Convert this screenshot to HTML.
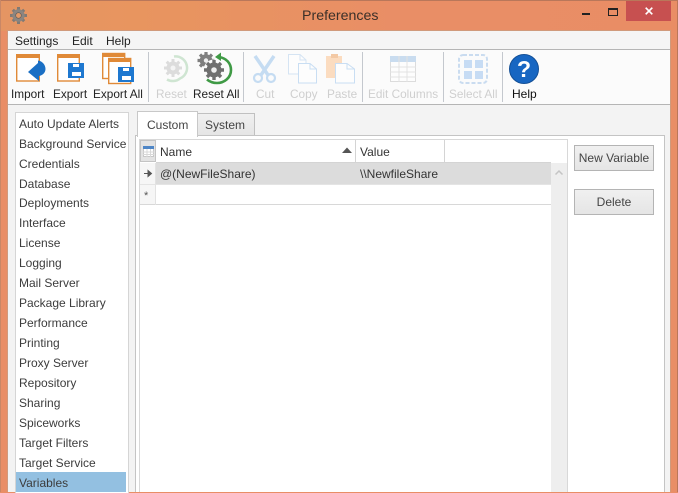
<!DOCTYPE html>
<html><head><meta charset="utf-8">
<style>
html,body{margin:0;padding:0}
body{width:678px;height:492px;overflow:hidden;position:relative;background:#e98e66;font-family:"Liberation Sans",sans-serif;font-size:12px;color:#333}
.a{position:absolute}
.t{position:absolute;white-space:nowrap;line-height:16px}
.tb{position:absolute;top:86px;white-space:nowrap;line-height:16px;color:#222;font-size:11.8px}
.dis{color:#cfcfcf}
.sep{position:absolute;top:52px;width:1px;height:50px;background:#c4c8ce}
.li{position:absolute;left:19px;white-space:nowrap;line-height:16px;color:#3c3c3c}
svg{position:absolute;overflow:visible}
.btn{position:absolute;left:574px;width:78px;height:24px;border:1px solid #b4b4b4;background:linear-gradient(#f0f0f0,#e5e5e5);text-align:center;line-height:24px;color:#444}
</style></head>
<body>
<div class="a" style="left:0;top:0;width:678px;height:31px;background:linear-gradient(90deg,#e59563,#e8955f 20%,#e98e66 60%,#e98d65)"></div>
<div class="a" style="left:0;top:0;width:678px;height:1px;background:#b9775a"></div>
<div class="a" style="left:677px;top:0;width:1px;height:492px;background:#b9775a"></div>
<div class="a" style="left:0;top:0;width:1px;height:492px;background:#c98766"></div>

<svg style="left:10px;top:7px" width="17" height="17" viewBox="0 0 17 17"><g stroke="#807a74" stroke-width="3"><path d="M8.500 0V17M0 8.500H17M2.800 2.800L14.200 14.200M14.200 2.800L2.800 14.200"/></g><circle cx="8.500" cy="8.500" r="6.200" fill="#8b8580"/><circle cx="8.500" cy="8.500" r="2.800" fill="#e39a68" stroke="#5f5a55" stroke-width=".6"/></svg>
<div class="t" style="left:302px;top:8px;font-size:14.2px;color:#3b3029">Preferences</div>
<div class="a" style="left:582px;top:13px;width:8px;height:2px;background:#222"></div>
<div class="a" style="left:608px;top:8px;width:8px;height:5px;border:1px solid #222;border-top:2px solid #222"></div>
<div class="a" style="left:626px;top:1px;width:45px;height:20px;background:#c75050"></div>
<svg style="left:645px;top:7px" width="8" height="8" viewBox="0 0 8 8"><path d="M.7.7L7.300 7.300M7.300.7L.7 7.300" stroke="#fff" stroke-width="1.700"/></svg>

<!-- window -->
<div class="a" style="left:7px;top:30px;width:664px;height:462px;background:#f3f3f3;border:1px solid #d09a7c;border-bottom:0;box-sizing:border-box"></div>
<div class="a" style="left:8px;top:31px;width:662px;height:18px;background:#f5f5f5"></div>
<div class="t" style="left:15px;top:33px;color:#222">Settings</div>
<div class="t" style="left:72px;top:33px;color:#222">Edit</div>
<div class="t" style="left:106px;top:33px;color:#222">Help</div>
<div class="a" style="left:8px;top:49px;width:662px;height:54px;background:#fbfbfb;border-top:1px solid #b5b5b5;border-bottom:1px solid #b5b5b5"></div>

<!-- Import -->
<svg style="left:16px;top:54px" width="30" height="29" viewBox="0 0 30 29"><rect x=".7" y="1" width="22.600" height="26" fill="#fff" stroke="#e08a38" stroke-width="1.400"/><rect x="0" y="0" width="24" height="4" fill="#e08a38"/><path d="M12 18L22 9V6.500C26 7 29.500 10.500 29.500 15 29.500 19 26 21.500 23 22V27z" fill="#1a6fc4"/></svg>
<div class="tb" style="left:11px">Import</div>
<!-- Export -->
<svg style="left:57px;top:54px" width="28" height="29" viewBox="0 0 28 29"><rect x=".7" y="1" width="21.600" height="26" fill="#fff" stroke="#e08a38" stroke-width="1.400"/><rect x="0" y="0" width="23" height="4" fill="#e08a38"/><path d="M11 9H27V24H11z" fill="#1e78d0"/><rect x="16" y="10" width="6" height="3" fill="#fff"/><rect x="15" y="18" width="9" height="4" fill="#fff"/></svg>
<div class="tb" style="left:53px">Export</div>
<!-- Export All -->
<svg style="left:102px;top:53px" width="33" height="32" viewBox="0 0 33 32"><rect x=".7" y=".5" width="22" height="25" fill="#fff" stroke="#e08a38" stroke-width="1.400"/><rect x="0" y="0" width="23" height="4" fill="#e08a38"/><rect x="6.700" y="5.500" width="22" height="25" fill="#fff" stroke="#e08a38" stroke-width="1.400"/><rect x="6" y="5" width="23" height="4" fill="#e08a38"/><path d="M16 14H32V29H16z" fill="#1e78d0"/><rect x="21" y="15" width="6" height="3" fill="#fff"/><rect x="20" y="23" width="9" height="4" fill="#fff"/></svg>
<div class="tb" style="left:93px">Export All</div>
<div class="sep" style="left:148px"></div>
<!-- Reset -->
<svg style="left:160px;top:54px" width="27" height="29" viewBox="0 0 27 29"><g stroke="#dcdcdc" stroke-width="3"><path d="M13 5V23M4 14H22M6.700 7.700L19.300 20.300M19.300 7.700L6.700 20.300"/></g><circle cx="13" cy="14" r="6.500" fill="#dcdcdc"/><circle cx="13" cy="14" r="2.500" fill="#f4f4f4"/><path d="M14 2.500A11.500 11.500 0 0 1 20 24.500 11.500 11.500 0 0 1 7 25.500" fill="none" stroke="#cfe5d2" stroke-width="2.500"/></svg>
<div class="tb dis" style="left:156px">Reset</div>
<!-- Reset All -->
<svg style="left:198px;top:52px" width="35" height="33" viewBox="0 0 35 33"><g stroke="#7f7f7f" stroke-width="3.200"><path d="M8 0V17M-.5 8.500H16.500M2 2.500L14 14.500M14 2.500L2 14.500"/></g><circle cx="8" cy="8.500" r="6.300" fill="#7f7f7f"/><circle cx="8" cy="8.500" r="2.200" fill="#eee"/><circle cx="16" cy="18" r="10.500" fill="#fbfbfb"/><g stroke="#6f6f6f" stroke-width="3.400"><path d="M16 8V28M6 18H26M9 11L23 25M23 11L9 25"/></g><circle cx="16" cy="18" r="7.500" fill="#6f6f6f"/><circle cx="16" cy="18" r="2.800" fill="#eee"/><path d="M21 5C28 6 33 11 33 18 33 26 26 31 19 31 15 31 12 30 9 27.500" fill="none" stroke="#3f9a45" stroke-width="2.600"/><path d="M17 5L23 .5V9z" fill="#3f9a45"/></svg>
<div class="tb" style="left:193px">Reset All</div>
<div class="sep" style="left:243px"></div>
<!-- Cut -->
<svg style="left:252px;top:55px" width="26" height="29" viewBox="0 0 26 29"><path d="M3 1L16 20M22 1L9 20" stroke="#c5dcf2" stroke-width="3.500" fill="none"/><circle cx="6" cy="23" r="4" fill="none" stroke="#c5dcf2" stroke-width="2.200"/><circle cx="19" cy="23" r="4" fill="none" stroke="#c5dcf2" stroke-width="2.200"/></svg>
<div class="tb dis" style="left:256px">Cut</div>
<!-- Copy -->
<svg style="left:288px;top:54px" width="30" height="30" viewBox="0 0 30 30"><path d="M.5.500H12L18 6V20H.5z" fill="#fdfdfd" stroke="#d5e4f3"/><path d="M10.500 9.500H22L28.500 15V29H10.500z" fill="#fdfdfd" stroke="#c9def3"/><path d="M22 9.500V15H28.500" fill="none" stroke="#c9def3"/><path d="M12 .5V6H18" fill="none" stroke="#d5e4f3"/></svg>
<div class="tb dis" style="left:290px">Copy</div>
<!-- Paste -->
<svg style="left:326px;top:54px" width="30" height="30" viewBox="0 0 30 30"><rect x="0" y="2" width="16" height="22" fill="#fbdcc0"/><rect x="5" y="0" width="7" height="4" fill="#f3c9a5"/><path d="M9.500 9.500H21L28.500 15V29H9.500z" fill="#fdfdfd" stroke="#c9def3"/><path d="M21 9.500V15H28.500" fill="none" stroke="#c9def3"/></svg>
<div class="tb dis" style="left:327px">Paste</div>
<div class="sep" style="left:362px"></div>
<!-- Edit Columns -->
<svg style="left:390px;top:56px" width="26" height="26" viewBox="0 0 26 26"><rect x=".5" y=".5" width="25" height="25" fill="#fdfdfd" stroke="#dcdcdc"/><rect x="0" y="0" width="26" height="6" fill="#c9dcef"/><path d="M0 11H26M0 16H26M0 21H26M9 0V26M17 0V26" stroke="#e2e2e2"/></svg>
<div class="tb dis" style="left:368px">Edit Columns</div>
<div class="sep" style="left:443px"></div>
<!-- Select All -->
<svg style="left:458px;top:54px" width="30" height="30" viewBox="0 0 30 30"><rect x="1" y="1" width="28" height="28" rx="4" fill="none" stroke="#cadcf0" stroke-width="2" stroke-dasharray="4 2"/><rect x="6" y="6" width="8" height="8" fill="#c7dcf4"/><rect x="17" y="6" width="8" height="8" fill="#c7dcf4"/><rect x="6" y="17" width="8" height="8" fill="#c7dcf4"/><rect x="17" y="17" width="8" height="8" fill="#c7dcf4"/></svg>
<div class="tb dis" style="left:449px">Select All</div>
<div class="sep" style="left:502px"></div>
<!-- Help -->
<svg style="left:509px;top:54px" width="30" height="30" viewBox="0 0 30 30"><circle cx="15" cy="15" r="14.500" fill="#1766c2" stroke="#134f96"/><text x="15" y="23" text-anchor="middle" font-family="Liberation Sans" font-weight="700" font-size="23" fill="#fff">?</text></svg>
<div class="tb" style="left:512px;color:#111;font-size:12px">Help</div>

<!-- list -->
<div class="a" style="left:15px;top:112px;width:112px;height:380px;background:#fff;border:1px solid #d5d5d5;border-bottom:0"></div>
<div class="a" style="left:16px;top:472px;width:110px;height:20px;background:#93c0e1"></div>
<div class="li" style="top:116px">Auto Update Alerts</div>
<div class="li" style="top:136px">Background Service</div>
<div class="li" style="top:156px">Credentials</div>
<div class="li" style="top:176px">Database</div>
<div class="li" style="top:195px">Deployments</div>
<div class="li" style="top:215px">Interface</div>
<div class="li" style="top:235px">License</div>
<div class="li" style="top:255px">Logging</div>
<div class="li" style="top:275px">Mail Server</div>
<div class="li" style="top:295px">Package Library</div>
<div class="li" style="top:315px">Performance</div>
<div class="li" style="top:335px">Printing</div>
<div class="li" style="top:355px">Proxy Server</div>
<div class="li" style="top:375px">Repository</div>
<div class="li" style="top:395px">Sharing</div>
<div class="li" style="top:415px">Spiceworks</div>
<div class="li" style="top:435px">Target Filters</div>
<div class="li" style="top:455px">Target Service</div>
<div class="li" style="top:475px">Variables</div>

<!-- tab panel -->
<div class="a" style="left:135px;top:135px;width:530px;height:357px;background:#fff;border:1px solid #c4c4c4;border-bottom:0;box-sizing:border-box"></div>
<div class="a" style="left:197px;top:113px;width:56px;height:21px;background:linear-gradient(#f0f0f0,#e5e5e5);border:1px solid #c0c0c0;border-bottom:0"></div>
<div class="a" style="left:137px;top:111px;width:59px;height:25px;background:#fff;border:1px solid #c8c8c8;border-bottom:0"></div>
<div class="t" style="left:147px;top:117px;color:#444">Custom</div>
<div class="t" style="left:205px;top:117px;color:#444">System</div>

<!-- grid -->
<div class="a" style="left:139px;top:139px;width:429px;height:353px;background:#fff;border:1px solid #d8d8d8;border-bottom:0;box-sizing:border-box"></div>
<div class="a" style="left:140px;top:140px;width:16px;height:22px;background:#e3e3e3;border:1px solid #c4c4c4;box-sizing:border-box"></div>
<svg style="left:143px;top:146px" width="11" height="11" viewBox="0 0 11 11"><rect x=".5" y=".5" width="10" height="10" fill="#fff" stroke="#c8c8c8"/><rect width="11" height="3" fill="#4f86c6"/><path d="M0 6H11M0 8.500H11M4 3V11M7.500 3V11" stroke="#d8d8d8"/></svg>
<div class="a" style="left:156px;top:162px;width:395px;height:1px;background:#d4d4d4"></div>
<div class="a" style="left:355px;top:140px;width:1px;height:22px;background:#d4d4d4"></div>
<div class="a" style="left:444px;top:140px;width:1px;height:22px;background:#d4d4d4"></div>
<div class="t" style="left:160px;top:144px">Name</div>
<div class="t" style="left:360px;top:144px">Value</div>
<svg style="left:342px;top:147px" width="10" height="6" viewBox="0 0 10 6"><path d="M0 6L5 .5 10 6z" fill="#555"/></svg>
<div class="a" style="left:140px;top:163px;width:16px;height:41px;background:#f6f6f6"></div>
<div class="a" style="left:156px;top:163px;width:395px;height:21px;background:#dcdcdc"></div>
<div class="a" style="left:140px;top:184px;width:411px;height:1px;background:#e4e4e4"></div>
<div class="a" style="left:140px;top:204px;width:411px;height:1px;background:#d8d8d8"></div>
<div class="a" style="left:155px;top:163px;width:1px;height:42px;background:#e2e2e2"></div>
<svg style="left:144px;top:170px" width="8" height="7" viewBox="0 0 8 7"><path d="M0 3.500H4.500M4 .5L7.500 3.500 4 6.500z" stroke="#555" fill="#555"/></svg>
<div class="t" style="left:144px;top:188px;color:#555;font-size:11px">*</div>
<div class="t" style="left:160px;top:166px">@(NewFileShare)</div>
<div class="t" style="left:360px;top:166px">\\NewfileShare</div>
<div class="a" style="left:551px;top:163px;width:16px;height:329px;background:#eeeeee"></div>
<svg style="left:555px;top:170px" width="8" height="5" viewBox="0 0 8 5"><path d="M.5 4.500L4 1 7.500 4.500" fill="none" stroke="#c4c4c4" stroke-width="1.500"/></svg>

<div class="btn" style="top:145px">New Variable</div>
<div class="btn" style="top:189px">Delete</div>
</body></html>
